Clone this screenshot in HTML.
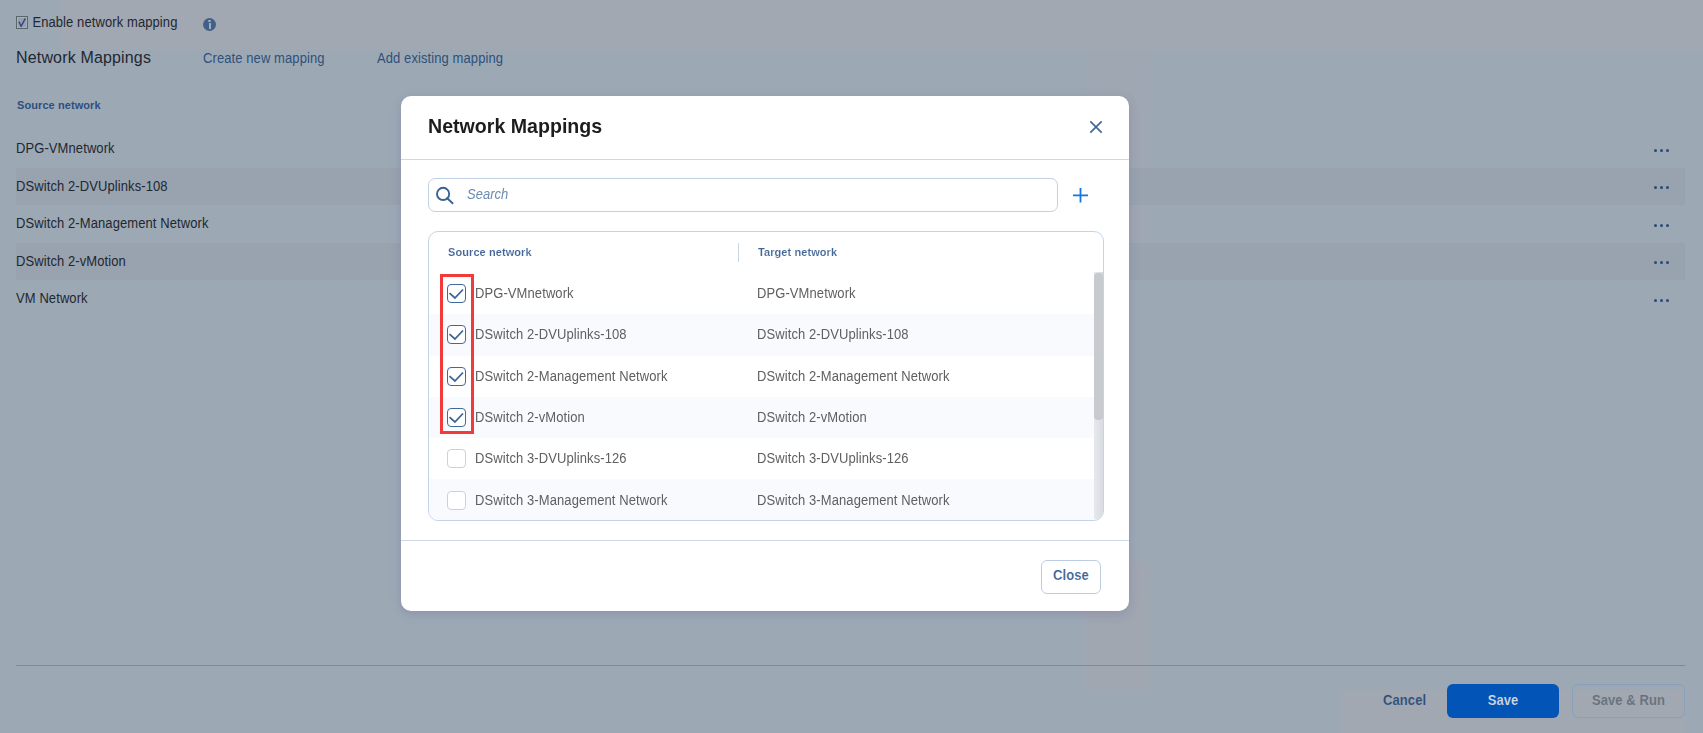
<!DOCTYPE html>
<html><head><meta charset="utf-8">
<style>
*{margin:0;padding:0;box-sizing:border-box}
html,body{width:1703px;height:733px;overflow:hidden}
body{background:#9ca9b5;font-family:"Liberation Sans",sans-serif;position:relative}
.a{position:absolute;white-space:nowrap}
.s11{font-size:11px;line-height:11px;letter-spacing:.08px;transform:scaleY(1.02);transform-origin:0 9.3px}
.s13{font-size:13px;line-height:13px;letter-spacing:.09px;transform:scaleY(1.1);transform-origin:0 11px}
.s16{font-size:16px;line-height:16px;letter-spacing:.16px;transform:scaleY(1.06);transform-origin:0 13.5px}
.b{font-weight:bold}
.g{will-change:transform}
.bgrow{position:absolute;left:16px;width:1669px;height:37.5px}
.bgrow.s{background:#98a3af}
.bgrow .tx{position:absolute;left:0;top:12px;color:#1f2731}
.dots{position:absolute;left:1637px;top:18.5px;width:17px;height:4px}
.dots i{position:absolute;top:0.3px;width:3.2px;height:3.2px;border-radius:50%;background:#2a4a76}
#modal{position:absolute;left:401px;top:96px;width:728px;height:515px;background:#fff;border-radius:10px;box-shadow:0 3px 11px rgba(80,60,130,.2)}
.m{position:absolute;white-space:nowrap}
.row{position:absolute;left:0;width:666px;height:41.34px}
.stripe{position:absolute;left:0;width:666px;background:#f8fafd}
.row .c1{position:absolute;left:46.3px;top:15px;color:#606060}
.row .c2{position:absolute;left:328px;top:15px;color:#606060}
.cb{position:absolute;left:18px;top:12px;width:19px;height:19px;border:1px solid #c3d3e7;border-radius:4px;background:#fff}
.cb.on{border:1.5px solid #41699a}
.cb svg{position:absolute;left:0;top:0}
</style></head>
<body>
<!-- faint composition bands -->
<div class="a" style="left:62px;top:0;width:1641px;height:50px;background:#a1a8b2"></div>
<div class="a" style="left:1086px;top:50px;width:64px;height:220px;background:#9fa7b2"></div>
<div class="a" style="left:1086px;top:561px;width:64px;height:129px;background:#a0a7b1"></div>
<div class="a" style="left:1342px;top:690px;width:344px;height:43px;background:#a1a8b2"></div>

<!-- top checkbox -->
<div class="a" style="left:16px;top:16px;width:12px;height:13px;border:1px solid #5c646e;background:#98a0aa;box-shadow:inset 0 0 0 1px #a7afb9"></div>
<svg class="a" style="left:17px;top:17px" width="11" height="11" viewBox="0 0 11 11"><path d="M1.9 4.6 L4.1 9.2 L8.4 1.4" fill="none" stroke="#34448a" stroke-width="1.4"/></svg>
<div class="a s13" style="left:32.4px;top:16px;color:#1f2731">Enable network mapping</div>
<div class="a" style="left:202.8px;top:17.8px;width:13.2px;height:13.2px;border-radius:50%;background:#40608a"></div>
<div class="a" style="left:208.4px;top:19.6px;width:2.2px;height:2.2px;background:#9fabb7;border-radius:50%"></div>
<div class="a" style="left:208.5px;top:22.7px;width:2px;height:6.2px;background:#9fabb7"></div>

<div class="a s16" style="left:16px;top:49.5px;color:#1f2731">Network Mappings</div>
<div class="a s13" style="left:203px;top:52px;color:#30507a">Create new mapping</div>
<div class="a s13" style="left:377px;top:52px;color:#30507a">Add existing mapping</div>
<div class="a s11 b" style="left:17px;top:100px;color:#2f4f7d">Source network</div>

<div class="bgrow" style="top:130px"><div class="tx s13">DPG-VMnetwork</div><div class="dots"><i style="left:0.5px"></i><i style="left:6.6px"></i><i style="left:12.8px"></i></div></div>
<div class="bgrow s" style="top:167.5px"><div class="tx s13">DSwitch 2-DVUplinks-108</div><div class="dots"><i style="left:0.5px"></i><i style="left:6.6px"></i><i style="left:12.8px"></i></div></div>
<div class="bgrow" style="top:205px"><div class="tx s13">DSwitch 2-Management Network</div><div class="dots"><i style="left:0.5px"></i><i style="left:6.6px"></i><i style="left:12.8px"></i></div></div>
<div class="bgrow s" style="top:242.5px"><div class="tx s13">DSwitch 2-vMotion</div><div class="dots"><i style="left:0.5px"></i><i style="left:6.6px"></i><i style="left:12.8px"></i></div></div>
<div class="bgrow" style="top:280px"><div class="tx s13">VM Network</div><div class="dots"><i style="left:0.5px"></i><i style="left:6.6px"></i><i style="left:12.8px"></i></div></div>

<div class="a" style="left:16px;top:665px;width:1669px;height:1px;background:#7f8995"></div>
<div class="a s13 b" style="left:1383px;top:694px;color:#2d4d7a;-webkit-text-stroke:.15px #a1a8b2">Cancel</div>
<div class="a" style="left:1447px;top:684px;width:112px;height:34px;border-radius:6px;background:#0254b6"></div>
<div class="a s13 b" style="left:1447px;top:694px;width:112px;text-align:center;color:#d3dae3;-webkit-text-stroke:.15px #0254b6">Save</div>
<div class="a" style="left:1572px;top:684px;width:113px;height:34px;border-radius:6px;border:1px solid #8aa0ba"></div>
<div class="a s13 b" style="left:1572px;top:694px;width:113px;text-align:center;color:#66707c;-webkit-text-stroke:.15px #a1a8b2">Save &amp; Run</div>

<div id="modal">
  <div class="m b g" style="left:27px;top:19.6px;font-size:19.6px;line-height:20px;color:#1d1d1d;transform:scaleY(1.05);transform-origin:0 16.8px">Network Mappings</div>
  <svg class="m" style="left:688.5px;top:24.5px" width="12" height="12" viewBox="0 0 12 12"><path d="M0.3 0.3L11.7 11.7M11.7 0.3L0.3 11.7" stroke="#3d6594" stroke-width="1.6" fill="none"/></svg>
  <div class="m" style="left:0;top:63px;width:728px;height:1px;background:#cbd8e7"></div>
  <!-- search -->
  <div class="m" style="left:27px;top:82px;width:630px;height:34px;border:1px solid #c2d2e5;border-radius:7px"></div>
  <svg class="m" style="left:34px;top:89px" width="20" height="20" viewBox="0 0 20 20"><circle cx="8.1" cy="8.9" r="6.1" stroke="#3a6391" stroke-width="1.9" fill="none"/><path d="M12.2 13.2L17.6 18.2" stroke="#3a6391" stroke-width="1.9" stroke-linecap="round"/></svg>
  <div class="m s13 g" style="left:65.5px;top:92px;font-style:italic;color:#6b8bb2;letter-spacing:0">Search</div>
  <svg class="m" style="left:672px;top:92px" width="16" height="16" viewBox="0 0 16 16"><path d="M0 7.3H15M7.5 0V14.6" stroke="#1673e6" stroke-width="1.8" fill="none"/></svg>
  <!-- table -->
  <div class="m" style="left:27px;top:135px;width:676px;height:290px;border:1px solid #c4d4e8;border-radius:10px;overflow:hidden">
    <div class="m s11 b g" style="left:19px;top:15px;color:#416596;-webkit-text-stroke:.12px #fff">Source network</div>
    <div class="m" style="left:309px;top:11px;width:1px;height:19px;background:#c9d6e5"></div>
    <div class="m s11 b g" style="left:329px;top:15px;color:#416596;-webkit-text-stroke:.12px #fff">Target network</div>
    <div class="m" style="left:0;top:40px;width:674px;height:248px;overflow:hidden">
      <div class="stripe" style="top:41.6px;height:42px"></div><div class="stripe" style="top:124.7px;height:41px"></div><div class="stripe" style="top:207px;height:41px"></div>
      <div class="row" style="top:0"><div class="cb on"><svg width="17" height="17" viewBox="0 0 17 17"><path d="M1.5 8.1L6.9 13L15 4.5" stroke="#3d6696" stroke-width="1.8" fill="none"/></svg></div><div class="c1 s13 g">DPG-VMnetwork</div><div class="c2 s13 g">DPG-VMnetwork</div></div>
      <div class="row" style="top:41.33px"><div class="cb on"><svg width="17" height="17" viewBox="0 0 17 17"><path d="M1.5 8.1L6.9 13L15 4.5" stroke="#3d6696" stroke-width="1.8" fill="none"/></svg></div><div class="c1 s13 g">DSwitch 2-DVUplinks-108</div><div class="c2 s13 g">DSwitch 2-DVUplinks-108</div></div>
      <div class="row" style="top:82.67px"><div class="cb on"><svg width="17" height="17" viewBox="0 0 17 17"><path d="M1.5 8.1L6.9 13L15 4.5" stroke="#3d6696" stroke-width="1.8" fill="none"/></svg></div><div class="c1 s13 g">DSwitch 2-Management Network</div><div class="c2 s13 g">DSwitch 2-Management Network</div></div>
      <div class="row" style="top:124px"><div class="cb on"><svg width="17" height="17" viewBox="0 0 17 17"><path d="M1.5 8.1L6.9 13L15 4.5" stroke="#3d6696" stroke-width="1.8" fill="none"/></svg></div><div class="c1 s13 g">DSwitch 2-vMotion</div><div class="c2 s13 g">DSwitch 2-vMotion</div></div>
      <div class="row" style="top:165.33px"><div class="cb"></div><div class="c1 s13 g">DSwitch 3-DVUplinks-126</div><div class="c2 s13 g">DSwitch 3-DVUplinks-126</div></div>
      <div class="row" style="top:206.67px"><div class="cb"></div><div class="c1 s13 g">DSwitch 3-Management Network</div><div class="c2 s13 g">DSwitch 3-Management Network</div></div>
    </div>
    <!-- scrollbar -->
    <div class="m" style="left:665px;top:40px;width:9px;height:248px;background:linear-gradient(90deg,#e6e8ec,#d9dce2);border-radius:0 0 9px 4px"></div>
    <div class="m" style="left:665px;top:41px;width:9px;height:147px;background:#c7cacf;border-radius:4px"></div>
  </div>
  <!-- red highlight -->
  <div class="m" style="left:39px;top:178px;width:34px;height:160px;border:3px solid #f23a3a"></div>
  <div class="m" style="left:0;top:444px;width:728px;height:1px;background:#cbd8e7"></div>
  <div class="m" style="left:640px;top:464px;width:60px;height:34px;border:1px solid #bccde2;border-radius:6px"></div>
  <div class="m s13 b" style="left:640px;top:473px;width:60px;text-align:center;color:#3a6195;-webkit-text-stroke:.15px #fff">Close</div>
</div>
</body></html>
